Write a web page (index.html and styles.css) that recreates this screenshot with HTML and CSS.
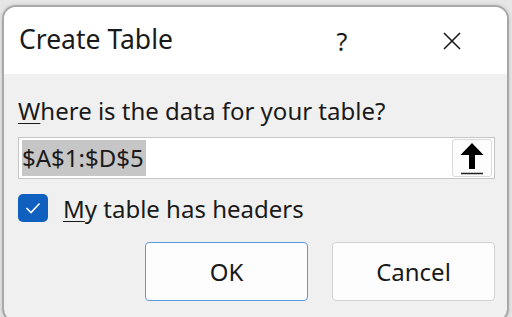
FILE: index.html
```html
<!DOCTYPE html>
<html lang="en">
<head>
    <meta charset="UTF-8" />
    <title>Create Table</title>
    <link rel="stylesheet" href="styles.css">
</head>
<body>
<div class="dialog">
    <div class="title-bar">
        <div class="title">Create Table</div>
        <div class="cap-btn">?</div>
        <div class="cap-btn">
            <svg width="18" height="18" viewBox="0 0 18 18">
                <path d="M1 1 L17 17 M17 1 L1 17" stroke="#1a1a1a" stroke-width="1.6" fill="none" />
            </svg>
        </div>
    </div>

    <div class="content">
        <div class="label"><u>W</u>here is the data for your table?</div>

        <div class="range-box">
            <span class="range-text">$A$1:$D$5</span>
            <div class="collapse-btn">
                <svg width="26" height="34" viewBox="0 0 26 34">
                    <path d="M13 2 L24.5 14 L16 14 L16 28 L10 28 L10 14 L1.5 14 Z" fill="#000" />
                    <path d="M2 32.5 L24 32.5" stroke="#222" stroke-width="1.4" />
                </svg>
            </div>
        </div>

        <div class="check-row">
            <div class="checkbox">
                <svg width="16" height="12" viewBox="0 0 16 12">
                    <path d="M1.5 6 L6 10.5 L14.5 1.5" stroke="#fff" stroke-width="1.6" fill="none" />
                </svg>
            </div>
            <div class="check-label"><u>M</u>y table has headers</div>
        </div>

        <div class="actions">
            <button class="btn btn-default">OK</button>
            <button class="btn">Cancel</button>
        </div>
    </div>
</div>
</body>
</html>
```

FILE: styles.css
```css
html, body {
    margin: 0;
    padding: 0;
}

body {
    background: #e6e6e6;
    font-family: "Noto Sans", "Open Sans", sans-serif;
    color: #1a1a1a;
    width: 512px;
    height: 317px;
    overflow: hidden;
}

.dialog {
    margin: 5px 3px 0 2px;
    height: 318px;
    box-sizing: border-box;
    border: 2px solid #a8a8a8;
    border-radius: 14px;
    background: #f0f0f0;
    overflow: hidden;
    box-shadow: 0 0 4px rgba(0, 0, 0, 0.15);
}

.title-bar {
    display: flex;
    align-items: center;
    height: 67px;
    background: #fff;
}

.title {
    flex: 1;
    font-size: 26.5px;
    padding-left: 15px;
    padding-bottom: 3px;
}

.cap-btn {
    width: 110px;
    display: flex;
    justify-content: center;
    font-size: 25px;
}

.content {
    padding: 22px 12px 0 14px;
}

.label {
    font-size: 24px;
    line-height: 30px;
}

.label u,
.check-label u {
    text-decoration-thickness: 1px;
    text-underline-offset: 3px;
}

.range-box {
    display: flex;
    align-items: center;
    justify-content: space-between;
    margin-top: 11px;
    height: 42px;
    box-sizing: border-box;
    border: 1px solid #c6c6c6;
    background: #fff;
    padding: 2px 2px 2px 3px;
}

.range-text {
    background: #c6c6c6;
    font-size: 24px;
    line-height: 36px;
    padding: 0 2px 0 0;
}

.collapse-btn {
    width: 40px;
    height: 38px;
    box-sizing: border-box;
    border: 1px solid #dadada;
    border-radius: 3px;
    background: #fdfdfd;
    display: flex;
    align-items: center;
    justify-content: center;
}

.check-row {
    display: flex;
    align-items: center;
    margin-top: 15px;
    height: 28px;
}

.checkbox {
    width: 30px;
    height: 28px;
    border-radius: 5px;
    background: #0f5fbf;
    display: flex;
    align-items: center;
    justify-content: center;
}

.check-label {
    font-size: 24px;
    margin-left: 15px;
}

.actions {
    display: flex;
    justify-content: flex-end;
    gap: 24px;
    margin-top: 20px;
}

.btn {
    width: 163px;
    height: 59px;
    font-family: inherit;
    font-size: 24px;
    color: #1a1a1a;
    background: #fdfdfd;
    border: 1px solid #d2d2d2;
    border-radius: 4px;
}

.btn-default {
    border-color: #5a9ae0;
}
```
